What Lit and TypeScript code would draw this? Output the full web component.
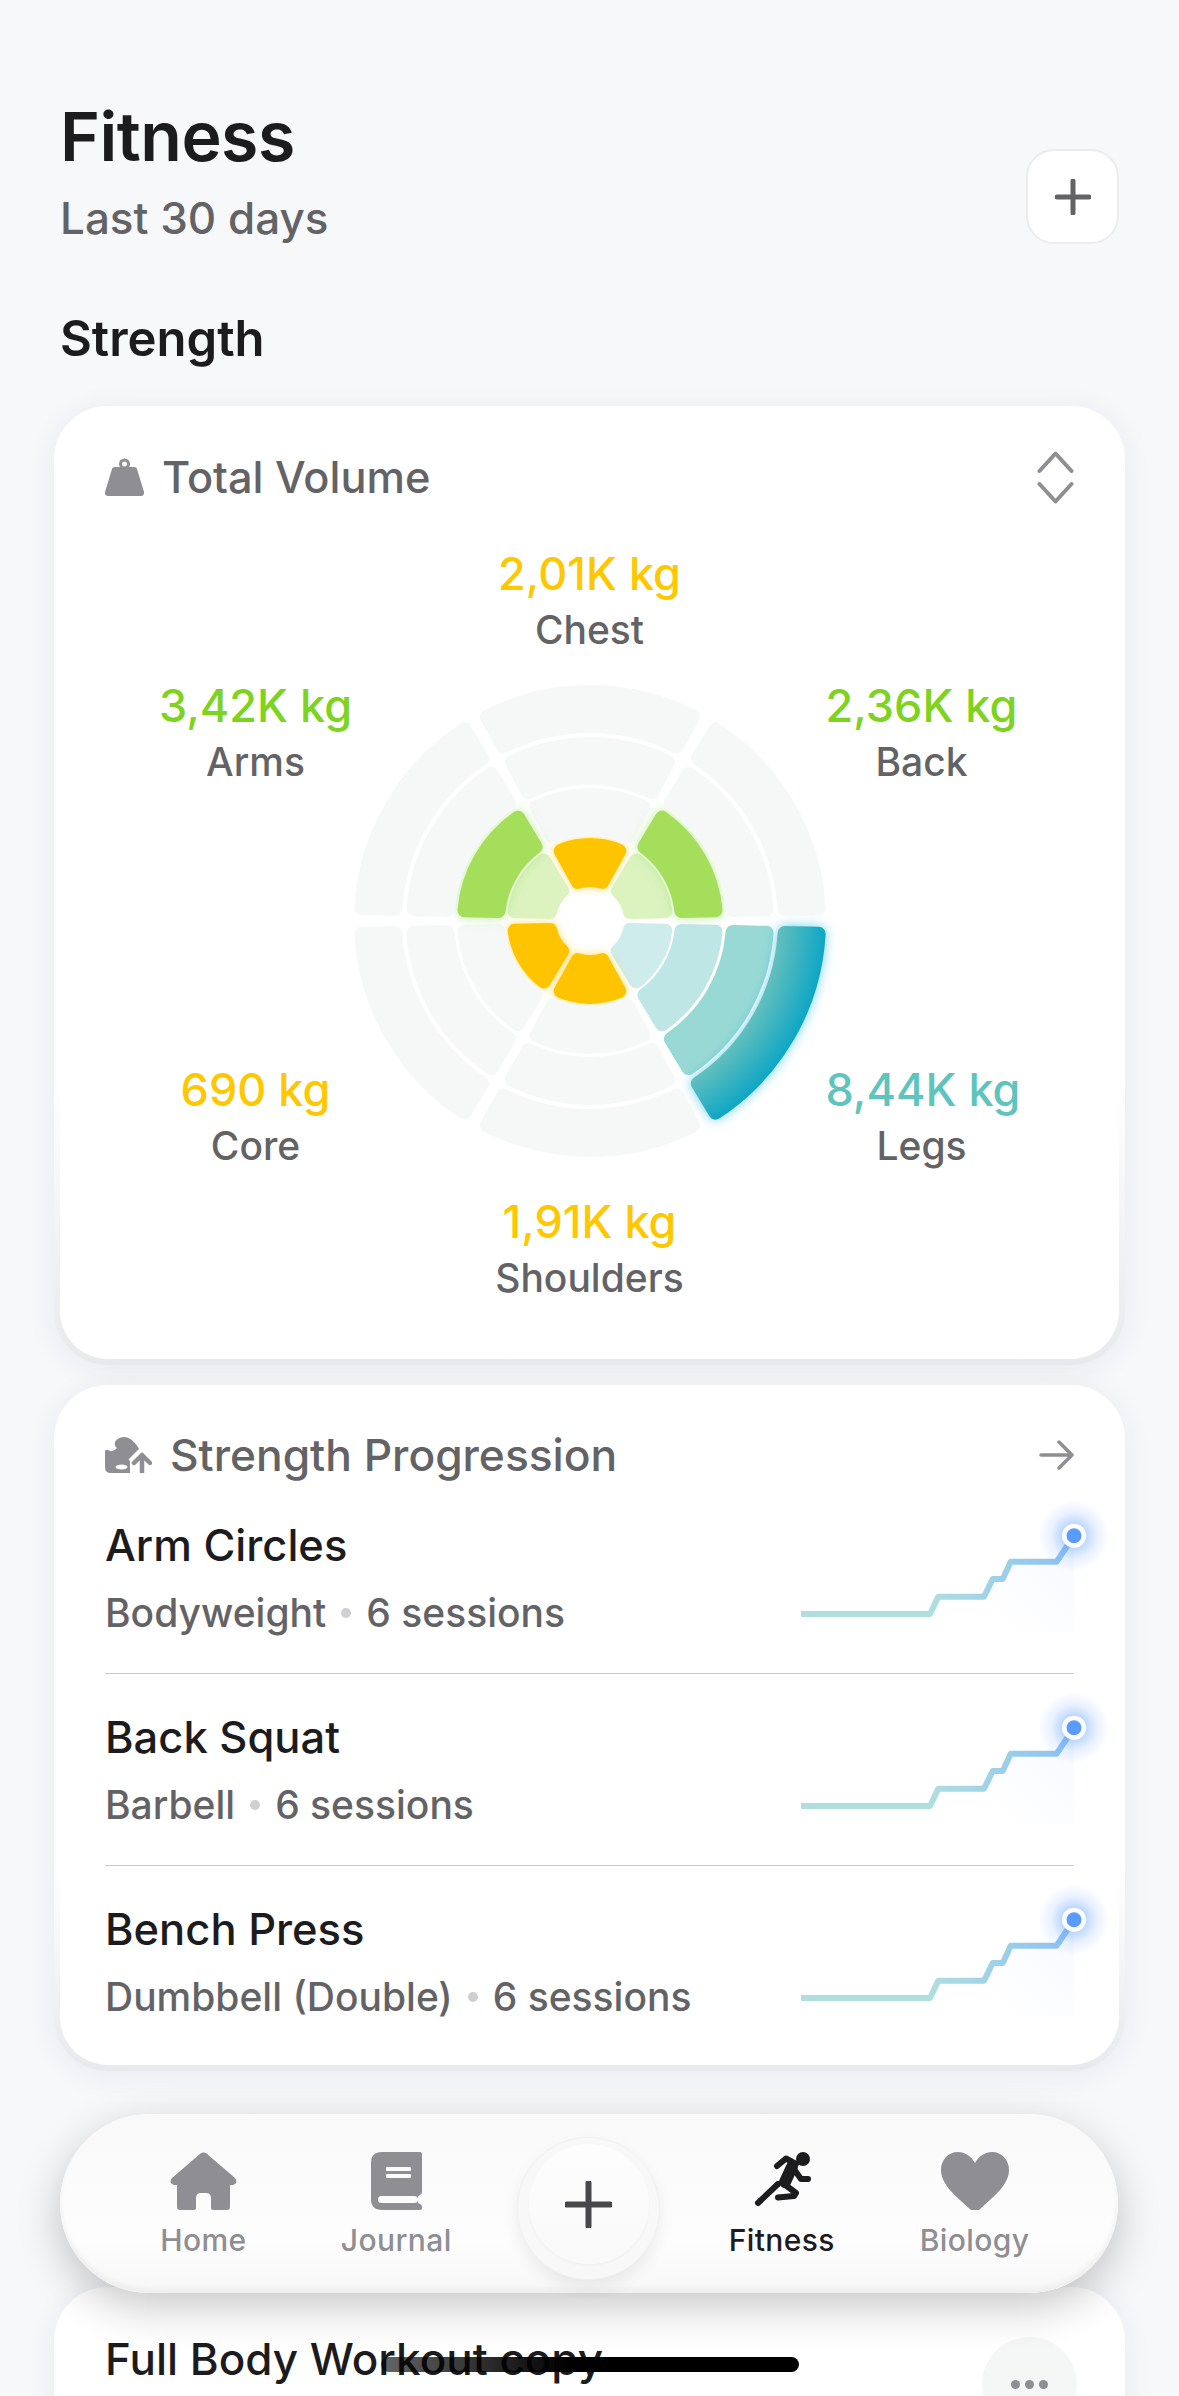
import { LitElement, html, svg, css } from 'lit';
import { customElement } from 'lit/decorators.js';

type Group = {
    name: string;
    value: string;
    tone: string;
    start: number;
    fills: string[];
};

const RINGS = [
    [34, 83],
    [85, 133],
    [136, 184],
    [188, 236],
];

const GROUPS: Group[] = [
    { name: 'Chest', value: '2,01K kg', tone: 'yellow', start: -120, fills: ['#ffc400'] },
    { name: 'Back', value: '2,36K kg', tone: 'green', start: -60, fills: ['#dcf3c0', '#a4de5b'] },
    {
        name: 'Legs',
        value: '8,44K kg',
        tone: 'teal',
        start: 0,
        fills: ['#cfecec', '#bde6e5', '#98d9d5', 'url(#legs)'],
    },
    { name: 'Shoulders', value: '1,91K kg', tone: 'yellow', start: 60, fills: ['#ffc400'] },
    { name: 'Core', value: '690 kg', tone: 'yellow', start: 120, fills: ['#ffc400'] },
    { name: 'Arms', value: '3,42K kg', tone: 'green', start: 180, fills: ['#dcf3c0', '#a4de5b'] },
];

const EXERCISES = [
    { name: 'Arm Circles', gear: 'Bodyweight', sessions: '6 sessions' },
    { name: 'Back Squat', gear: 'Barbell', sessions: '6 sessions' },
    { name: 'Bench Press', gear: 'Dumbbell (Double)', sessions: '6 sessions' },
];

// ring sector inset by the corner radius, the stroke brings it back out with round joins
function sector(r0: number, r1: number, a0: number, a1: number, c = 7) {
    const ri = r0 + c;
    const ro = r1 - c;
    const at = (r: number, a: number, dir: number) => {
        const off = 1.2 + 0.02 * r + c;
        const t = (a * Math.PI) / 180 + dir * Math.asin(off / r);
        return `${(r * Math.cos(t)).toFixed(2)} ${(r * Math.sin(t)).toFixed(2)}`;
    };
    return `M${at(ro, a0, 1)} A${ro} ${ro} 0 0 1 ${at(ro, a1, -1)} L${at(ri, a1, -1)} A${ri} ${ri} 0 0 0 ${at(ri, a0, 1)} Z`;
}

@customElement('app-root')
class AppRoot extends LitElement {
    static styles = css`
        :host {
            display: block;
            position: relative;
            height: 2396px;
            overflow: hidden;
            background: #f7f8fa;
            font-family: Inter, 'Noto Sans', sans-serif;
            color: #1c1c1e;
        }

        .page {
            padding: 96px 54px 0;
        }

        .head {
            display: flex;
            justify-content: space-between;
            align-items: flex-end;
            margin: 0 6px 0 6px;
        }

        h1 {
            margin: 0;
            font-size: 68px;
            line-height: 80px;
            font-weight: 600;
            letter-spacing: -0.5px;
        }

        .period {
            margin: 16px 0 0;
            font-size: 44px;
            line-height: 52px;
            font-weight: 500;
            color: #636366;
        }

        .add {
            width: 93px;
            height: 95px;
            box-sizing: border-box;
            display: flex;
            align-items: center;
            justify-content: center;
            background: #fff;
            border: 2px solid #ececee;
            border-radius: 28px;
        }

        h2 {
            margin: 65px 0 37px 6px;
            font-size: 49px;
            line-height: 60px;
            font-weight: 600;
        }

        .card {
            box-sizing: border-box;
            border: 6px solid transparent;
            border-radius: 54px;
            background: linear-gradient(#fff, #fff) padding-box,
                linear-gradient(to bottom, #fff 70%, #e8e9ec) border-box;
            box-shadow: 0 4px 30px rgba(30, 40, 70, 0.07);
            margin-bottom: 20px;
        }

        .volume {
            height: 959px;
            padding: 37px 45px 0;
        }

        .card-head {
            display: flex;
            align-items: center;
            height: 56px;
            font-size: 44.3px;
            font-weight: 500;
            color: #636366;
        }

        .volume .card-head {
            font-size: 43.3px;
        }

        .card-head svg:first-child {
            margin-right: 18px;
        }

        .card-head .end {
            margin-left: auto;
        }

        .chart {
            display: grid;
            grid-template-columns: 196px 472px 196px;
            justify-content: center;
            row-gap: 20px;
            margin: 41px 0 0;
        }

        .chart .top {
            grid-area: 1 / 2;
        }

        .chart .bottom {
            grid-area: 3 / 2;
        }

        .side {
            display: flex;
            flex-direction: column;
            justify-content: space-between;
            height: 496px;
            grid-row: 2;
        }

        .side.left {
            grid-column: 1;
        }

        .side.right {
            grid-column: 3;
            padding-right: 4px;
        }

        .dial {
            grid-area: 2 / 2;
            display: block;
            width: 472px;
            height: 472px;
            margin-top: 7px;
            overflow: visible;
        }

        .stat {
            text-align: center;
            white-space: nowrap;
            font-size: 39px;
            line-height: 56px;
            font-weight: 500;
            color: #636366;
        }

        .stat b {
            display: block;
            font-size: 45px;
            font-weight: 500;
        }

        .yellow b {
            color: #ffc700;
        }

        .green b {
            color: #7ed321;
        }

        .teal b {
            color: #5fc4bd;
        }

        .glow-yellow {
            filter: drop-shadow(0 0 5px rgba(255, 196, 0, 0.55));
        }

        .glow-green {
            filter: drop-shadow(0 0 6px rgba(140, 220, 80, 0.55));
        }

        .glow-teal {
            filter: drop-shadow(0 0 6px rgba(20, 180, 220, 0.6));
        }

        .progress {
            padding: 36px 45px 40px;
        }

        .rows {
            margin-top: 32px;
        }

        .row {
            display: flex;
            justify-content: space-between;
            padding-bottom: 32px;
            margin-bottom: 33px;
            border-bottom: 1px solid #c9c9cb;
        }

        .row:last-child {
            padding-bottom: 0;
            margin-bottom: 0;
            border-bottom: none;
        }

        .name {
            font-size: 43.5px;
            line-height: 60px;
            font-weight: 500;
        }

        .meta {
            display: flex;
            align-items: center;
            margin-top: 10px;
            font-size: 39px;
            line-height: 56px;
            font-weight: 500;
            color: #636366;
        }

        .meta i {
            width: 10px;
            height: 10px;
            margin: 0 15px;
            border-radius: 50%;
            background: #cfcfd1;
        }

        .spark {
            display: block;
            width: 273px;
            height: 122px;
            margin-top: -5px;
            overflow: visible;
        }

        .workout {
            display: flex;
            justify-content: space-between;
            align-items: flex-start;
            min-height: 260px;
            margin-top: 216px;
            padding: 36px 45px 0;
        }

        .workout .name {
            font-size: 44px;
        }

        .more {
            width: 95px;
            height: 95px;
            margin: 8px -3px 0 0;
            display: flex;
            align-items: center;
            justify-content: center;
            gap: 5px;
            border-radius: 50%;
            background: #f5f6f6;
        }

        .more i {
            width: 9px;
            height: 9px;
            border-radius: 50%;
            background: #8e8e93;
        }

        .nav {
            position: absolute;
            left: 60px;
            top: 2114px;
            width: 1058px;
            height: 179px;
            box-sizing: border-box;
            padding: 0 47px;
            display: grid;
            grid-template-columns: repeat(5, 1fr);
            border-radius: 90px;
            background: linear-gradient(#f9f9f9, #fdfdfd 70%, #f8f8f8);
            box-shadow: 0 14px 44px rgba(0, 0, 0, 0.22), inset 0 -5px 5px #efefef;
        }

        .tab {
            display: flex;
            flex-direction: column;
            align-items: center;
            padding-top: 38px;
            font-size: 30px;
            line-height: 36px;
            font-weight: 500;
            letter-spacing: 0.4px;
            color: #8e8e93;
        }

        .tab svg {
            display: block;
            height: 58px;
            margin-bottom: 12px;
            overflow: visible;
        }

        .tab.on {
            color: #1c1c1e;
        }

        .fab {
            justify-self: center;
            width: 143px;
            height: 143px;
            margin-top: 23px;
            box-sizing: border-box;
            padding-top: 6px;
            display: flex;
            justify-content: center;
            border: 1px solid #f1f1f1;
            border-radius: 50%;
            background: #f8f8f8;
            box-shadow: 0 8px 16px rgba(0, 0, 0, 0.07);
        }

        .fab span {
            width: 120px;
            height: 120px;
            display: flex;
            align-items: center;
            justify-content: center;
            border-radius: 50%;
            background: linear-gradient(#fdfdfd, #f9f9f9);
            box-shadow: 0 2px 3px rgba(0, 0, 0, 0.03);
        }

        .home-bar {
            position: absolute;
            left: 381px;
            top: 2357px;
            width: 418px;
            height: 15px;
            border-radius: 8px;
            background: linear-gradient(to right, rgba(0, 0, 0, 0.6), #000 45%);
        }
    `;

    render() {
        return html`
            <div class="page">
                <header class="head">
                    <div>
                        <h1>Fitness</h1>
                        <p class="period">Last 30 days</p>
                    </div>
                    <div class="add">${this.renderPlus(36, 5, '#636366')}</div>
                </header>
                <h2>Strength</h2>
                <section class="card volume">
                    <div class="card-head">
                        ${this.renderWeight()} Total Volume
                        <svg class="end" width="37" height="53" viewBox="0 0 37 53" fill="none" stroke="#8e8e93" stroke-width="4" stroke-linecap="round" stroke-linejoin="round">
                            <path d="M2.5 20 L18.5 2.5 L34.5 20 M2.5 33 L18.5 50.500 L34.5 33" />
                        </svg>
                    </div>
                    ${this.renderChart()}
                </section>
                <section class="card progress">
                    <div class="card-head">
                        ${this.renderProgressIcon()} Strength Progression
                        <svg class="end" width="35" height="30" viewBox="0 0 35 30" fill="none" stroke="#8e8e93" stroke-width="3.500" stroke-linecap="round" stroke-linejoin="round">
                            <path d="M2 15 H33 M20 2 L33 15 L20 28" />
                        </svg>
                    </div>
                    <div class="rows">
                        ${EXERCISES.map(
                            (ex, i) => html`
                                <div class="row">
                                    <div>
                                        <div class="name">${ex.name}</div>
                                        <div class="meta">${ex.gear}<i></i>${ex.sessions}</div>
                                    </div>
                                    ${this.renderSpark(i)}
                                </div>
                            `
                        )}
                    </div>
                </section>
                <section class="card workout">
                    <div class="name">Full Body Workout copy</div>
                    <div class="more"><i></i><i></i><i></i></div>
                </section>
            </div>
            ${this.renderNav()}
            <div class="home-bar"></div>
        `;
    }

    renderPlus(size: number, width: number, color: string) {
        const m = size / 2;
        return html`<svg width=${size} height=${size} viewBox="0 0 ${size} ${size}" fill="none" stroke=${color} stroke-width=${width} stroke-linecap="round">
            <path d="M${m} 2 V${size - 2} M2 ${m} H${size - 2}" />
        </svg>`;
    }

    renderStat(g: Group) {
        return html`<div class="stat ${g.tone}"><b>${g.value}</b>${g.name}</div>`;
    }

    renderChart() {
        const by = (name: string) => GROUPS.find((g) => g.name === name)!;
        return html`
            <div class="chart">
                <div class="top">${this.renderStat(by('Chest'))}</div>
                <div class="side left">${this.renderStat(by('Arms'))}${this.renderStat(by('Core'))}</div>
                <svg class="dial" viewBox="-236 -236 472 472">
                    <defs>
                        <radialGradient id="legs" gradientUnits="userSpaceOnUse" cx="0" cy="0" r="236">
                            <stop offset="0.8" stop-color="#62bfbd" />
                            <stop offset="1" stop-color="#0ea6c6" />
                        </radialGradient>
                    </defs>
                    ${GROUPS.map((g) => this.renderSector(g))}
                </svg>
                <div class="side right">${this.renderStat(by('Back'))}${this.renderStat(by('Legs'))}</div>
                <div class="bottom">${this.renderStat(by('Shoulders'))}</div>
            </div>
        `;
    }

    renderSector(g: Group) {
        return RINGS.map(([r0, r1], i) => {
            const fill = g.fills[i] ?? '#f6f8f8';
            // only the last, strongest ring of a group has a glow
            const cls = i === g.fills.length - 1 ? `glow-${g.tone}` : '';
            return svg`<path class=${cls} d=${sector(r0, r1, g.start, g.start + 60)} fill=${fill} stroke=${fill} stroke-width="14" stroke-linejoin="round" />`;
        });
    }

    renderSpark(i: number) {
        const line = 'M0 104 H129 L137.300 86.700 H183 L191.700 69 H201.700 L209.700 51.700 H255.700 L273 25.700';
        return html`<svg class="spark" viewBox="0 0 273 122">
            <defs>
                <linearGradient id="stroke${i}" gradientUnits="userSpaceOnUse" x1="130" y1="0" x2="273" y2="0">
                    <stop offset="0" stop-color="#aedfde" />
                    <stop offset="1" stop-color="#8cc0f3" />
                </linearGradient>
                <linearGradient id="area${i}" gradientUnits="userSpaceOnUse" x1="273" y1="50" x2="200" y2="122">
                    <stop offset="0" stop-color="#5b9bff" stop-opacity="0.05" />
                    <stop offset="1" stop-color="#5b9bff" stop-opacity="0" />
                </linearGradient>
                <radialGradient id="halo${i}">
                    <stop offset="0.3" stop-color="#5b9bff" stop-opacity="0.42" />
                    <stop offset="0.65" stop-color="#5b9bff" stop-opacity="0.13" />
                    <stop offset="1" stop-color="#5b9bff" stop-opacity="0" />
                </radialGradient>
            </defs>
            <path d="${line} V122 H0 Z" fill="url(#area${i})" />
            <path d=${line} fill="none" stroke="url(#stroke${i})" stroke-width="6" stroke-linejoin="round" />
            <circle cx="273" cy="25.700" r="36" fill="url(#halo${i})" />
            <circle cx="273" cy="25.700" r="12" fill="#fff" />
            <circle cx="273" cy="25.700" r="7.500" fill="#5b9bff" />
        </svg>`;
    }

    renderWeight() {
        return html`<svg width="39" height="38" viewBox="0 0 39 38" fill="#8e8e93">
            <circle cx="19.500" cy="6" r="4" fill="none" stroke="#8e8e93" stroke-width="3" />
            <path d="M10 9 H29 Q31.500 9 32 11 L39 34 Q39.500 38 36 38 H3 Q-0.500 38 0 34 L7 11 Q7.500 9 10 9 Z" />
        </svg>`;
    }

    renderProgressIcon() {
        return html`<svg width="47" height="36" viewBox="0 0 47 36" fill="#8e8e93">
            <path d="M10 5 Q13 0 20 0 Q27 1 33 10 L35 14 L25 22 V36 H6 Q0 36 0 30 V15 Q0 12 3 13 Q8 16 12 11 Q9 9 10 5 Z" />
            <ellipse cx="16.500" cy="30" rx="6" ry="2.500" fill="#fff" />
            <path d="M37 36 V16 M27 26 L37 16 L47 26" fill="none" stroke="#fff" stroke-width="10" stroke-linejoin="round" />
            <path d="M37 35 V18 M29 26 L37 18 L45 26" fill="none" stroke="#8e8e93" stroke-width="4.500" stroke-linecap="round" stroke-linejoin="round" />
        </svg>`;
    }

    renderNav() {
        return html`
            <nav class="nav">
                <div class="tab">
                    <svg width="67" height="58" viewBox="0 0 67 58" fill="#8e8e93">
                        <path d="M30.500 1.500 Q33.500 -0.500 36.500 1.500 L65 26 Q69 31 63 33 H60 V55 Q60 58 57 58 H43 Q41 58 41 56 V46 Q41 41 36 41 H31 Q26 41 26 46 V56 Q26 58 24 58 H10 Q7 58 7 55 V33 H4 Q-2 31 2 26 Z" />
                    </svg>
                    Home
                </div>
                <div class="tab">
                    <svg width="51" height="58" viewBox="0 0 51 58" fill="#8e8e93">
                        <path d="M11 0 H49 Q51 0 51 2 V40 Q51 42 49 43 L47 44 V51 L49 52 Q51 53 51 55 V56 Q51 58 49 58 H11 Q0 58 0 47 V11 Q0 0 11 0 Z" />
                        <rect x="7" y="44" width="40" height="7" rx="3.500" fill="#fbfbfb" />
                        <rect x="15" y="15" width="25" height="4" rx="1" fill="#fbfbfb" />
                        <rect x="15" y="22" width="25" height="4" rx="1" fill="#fbfbfb" />
                    </svg>
                    Journal
                </div>
                <div class="fab"><span>${this.renderPlus(47, 6, '#48484a')}</span></div>
                <div class="tab on">
                    <svg width="56" height="58" viewBox="0 0 56 58" fill="none" stroke="#1c1c1e" stroke-linecap="round" stroke-linejoin="round">
                        <circle cx="49" cy="7" r="7" fill="#1c1c1e" stroke="none" />
                        <path d="M23 14 L32 6.500 L42 12" stroke-width="6" />
                        <path d="M38 15 L31 30" stroke-width="12" />
                        <path d="M42 20 L47 27 H54" stroke-width="6" />
                        <path d="M30 32 L42 41 L40 44 L24 45.500" stroke-width="6" />
                        <path d="M24 32 L4 51" stroke-width="6" />
                    </svg>
                    Fitness
                </div>
                <div class="tab">
                    <svg width="68" height="58" viewBox="0 0 68 58" fill="#8e8e93">
                        <path d="M34 11 C30 4 24 0 17 0 C7 0 0 8 0 18 C0 33 15 44 30 58 H38 C53 44 68 33 68 18 C68 8 61 0 51 0 C44 0 38 4 34 11 Z" />
                    </svg>
                    Biology
                </div>
            </nav>
        `;
    }
}

declare global {
    interface HTMLElementTagNameMap {
        'app-root': AppRoot;
    }
}
